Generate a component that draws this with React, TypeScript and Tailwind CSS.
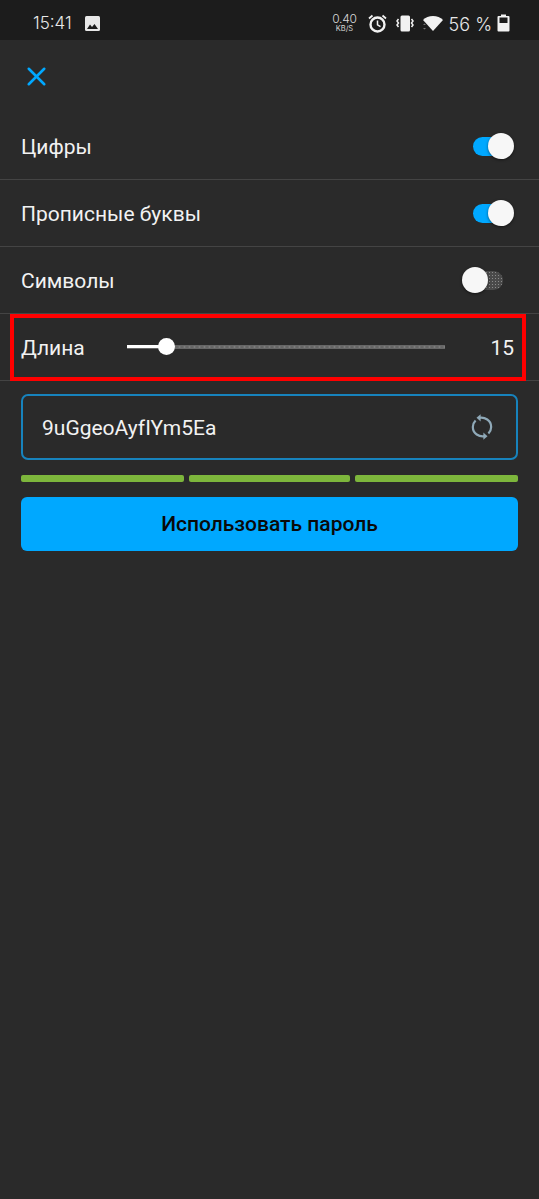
import React from "react";
import { X } from "lucide-react";

const font = { fontFamily: "Roboto, sans-serif" };

const Toggle = ({ on }: { on: boolean }) => (
  <div className="relative w-[41px] h-[26px]">
    <div
      className={
        on
          ? "absolute left-0 top-[4px] w-[36px] h-[19px] rounded-full bg-[#00a8ff]"
          : "absolute right-0 top-[4px] w-[36px] h-[19px] rounded-full bg-[#4a4a4a] bg-[radial-gradient(#8a8a8a_35%,transparent_40%)] bg-[length:3px_3px]"
      }
    />
    <div className="absolute top-0 w-[26px] h-[26px] rounded-full bg-[#f7f7f7] shadow-[0_1px_3px_rgba(0,0,0,0.5)]" style={on ? { right: 0 } : { left: 0 }} />
  </div>
);

const OptionRow = ({ label, on, pad }: { label: string; on: boolean; pad: string }) => (
  <div className={`flex items-center justify-between h-[67px] pl-[21px] border-b border-[#444444] ${pad}`}>
    <span className="text-[21px] text-[#f2f2f2] pt-[3px]">{label}</span>
    <Toggle on={on} />
  </div>
);

const StatusBar = () => (
  <div className="flex items-center h-[40px] pt-[6px] pl-[33px] pr-[29px] bg-[#1c1c1c] text-[#e8e8e8]">
    <span className="text-[17px] font-light mt-[2px]" style={{ fontFamily: "Inter, sans-serif" }}>15:41</span>
    <svg className="ml-[13px]" width="15" height="15" viewBox="0 0 15 15">
      <rect width="15" height="15" rx="1.500" fill="#e8e8e8" />
      <path d="M2 13 5 8.500 7 11 9.500 8 13 13Z" fill="#1c1c1c" />
    </svg>
    <div className="flex-1" />
    <div className="flex flex-col items-center leading-none mr-[11px] text-[#d8d8d8]" style={{ fontFamily: "Inter, sans-serif" }}>
      <span className="text-[12px] font-light tracking-[-0.3px]">0.40</span>
      <span className="text-[7.5px]">KB/S</span>
    </div>
    <svg width="19" height="19" viewBox="0 0 19 19" className="mr-[9px]">
      <circle cx="9.500" cy="10.500" r="7" fill="none" stroke="#f2f2f2" strokeWidth="2.400" />
      <path d="M9.500 6.500V10.800L12.500 12.600" fill="none" stroke="#f2f2f2" strokeWidth="1.500" />
      <path d="M1 4.500 4.500 1.500M18 4.500 14.500 1.500" stroke="#f2f2f2" strokeWidth="1.800" />
    </svg>
    <svg width="18" height="17" viewBox="0 0 18 17" className="mr-[9px]">
      <rect x="4.500" y="0.500" width="9.500" height="16" rx="1.500" fill="#f2f2f2" />
      <path d="M2.500 4 1 6 2.500 8 1 10 2.500 12M15.500 4 17 6 15.500 8 17 10 15.500 12" fill="none" stroke="#f2f2f2" strokeWidth="1.500" />
    </svg>
    <svg width="20" height="15" viewBox="0 0 20 15" className="mr-[6px]">
      <path d="M0 4C2.500 1.500 6 0 10 0 14 0 17.500 1.500 20 4L10 15Z" fill="#f2f2f2" />
      <path d="M0 9 1.500 7.500 3 9ZM0 12 1.500 13.500 3 12Z" fill="#777777" />
    </svg>
    <span className="text-[18px] font-light mr-[5px] mt-[2px]" style={{ fontFamily: "Inter, sans-serif" }}>56 %</span>
    <svg width="13" height="18" viewBox="0 0 13 18">
      <path d="M4 0.500H9V2H11.500Q12.500 2 12.500 3V16.500Q12.500 17.500 11.500 17.500H1.500Q0.500 17.500 0.500 16.500V3Q0.500 2 1.500 2H4Z" fill="#f2f2f2" />
      <rect x="2.500" y="3.500" width="8" height="5.500" fill="#1c1c1c" />
    </svg>
  </div>
);

export default function App() {
  return (
    <div className="relative w-[539px] h-[1199px] bg-[#2a2a2a] overflow-hidden" style={font}>
      <StatusBar />

      <div className="h-[73px] pl-[21px] flex items-center">
        <X size={31} strokeWidth={2} className="text-[#00a8ff]" />
      </div>

      <OptionRow label="Цифры" on pad="pr-[25px]" />
      <OptionRow label="Прописные буквы" on pad="pr-[25px]" />
      <OptionRow label="Символы" on={false} pad="pr-[36px]" />

      <div className="flex items-center h-[67px] pl-[21px] pr-[25px] border-b border-[#444444]">
        <span className="w-[106px] text-[21px] text-[#f2f2f2] pt-[3px]">Длина</span>
        <div className="relative w-[318px] h-[16px]">
          <div className="absolute left-0 top-[6px] h-[4px] w-full bg-[#666666] bg-[radial-gradient(#7c7c7c_30%,transparent_35%)] bg-[length:5px_4px]" />
          <div className="absolute left-0 top-[6px] h-[3px] w-[40px] bg-white" />
          <div className="absolute left-[31px] top-[-1px] h-[17px] w-[17px] rounded-full bg-white" />
        </div>
        <span className="flex-1 text-right text-[21px] text-[#f2f2f2] pt-[3px]">15</span>
      </div>

      <div className="px-[21px] pt-[13px]">
        <div className="flex items-center justify-between h-[66px] pl-[19px] pr-[23px] rounded-[7px] border-2 border-[#1783bd]">
          <span className="text-[21px] text-[#f2f2f2] pt-[3px]">9uGgeoAyfIYm5Ea</span>
          <svg width="22" height="28" viewBox="0 0 24 29" fill="none" stroke="#8fa9b8" strokeWidth="2.400">
            <path d="M9 4.500C15 3.500 22 7 22 14.500C22 17.500 20.500 20 19 21.500" />
            <path d="M15 24.500C9 25.500 2 22 2 14.500C2 11.500 3.500 9 5 7.500" />
            <path d="M10.500 0.500 6 4.500 10.500 8.500Z" fill="#8fa9b8" stroke="none" />
            <path d="M13.500 20.500 18 24.500 13.500 28.500Z" fill="#8fa9b8" stroke="none" />
          </svg>
        </div>

        <div className="flex gap-[5px] mt-[15px]">
          <div className="w-[163px] h-[7px] rounded-[2px] bg-[#7db63c]" />
          <div className="w-[161px] h-[7px] rounded-[2px] bg-[#7db63c]" />
          <div className="w-[163px] h-[7px] rounded-[2px] bg-[#7db63c]" />
        </div>

        <button className="block w-full h-[54px] mt-[15px] pt-[2px] rounded-[6px] bg-[#00a8ff] text-[21px] font-medium text-[#0a0a0a]">
          Использовать пароль
        </button>
      </div>

      {/* annotation box on top of the length row */}
      <div className="absolute left-[10px] top-[314px] w-[516px] h-[67px] border-[4px] border-[#ff0000]" />
    </div>
  );
}
